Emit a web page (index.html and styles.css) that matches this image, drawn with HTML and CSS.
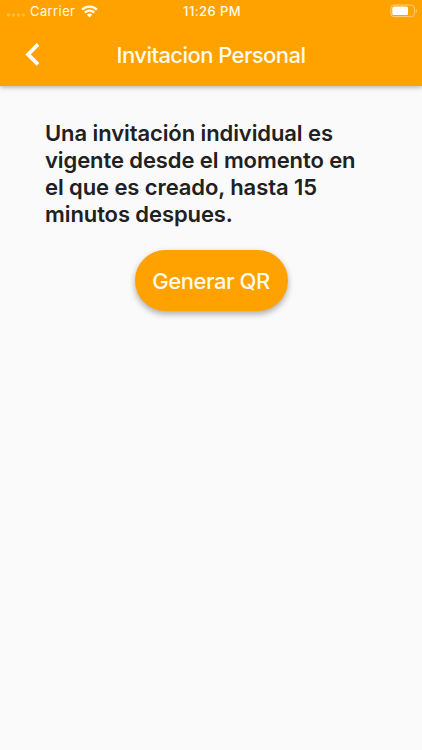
FILE: index.html
```html
<!DOCTYPE html>
<html lang="es">
<head>
<meta charset="utf-8">
<title>Invitacion Personal</title>
<link rel="stylesheet" href="styles.css">
</head>
<body>
<header class="header">
  <div class="status">
    <div class="carrier">
      <svg class="dots" width="20" height="4" viewBox="0 0 20 4"><g fill="#fff" opacity=".25"><circle cx="2.500" cy="2" r="1.700"/><circle cx="7.500" cy="2" r="1.700"/><circle cx="12.500" cy="2" r="1.700"/><circle cx="17.500" cy="2" r="1.700"/></g></svg>
      <span class="carrier-name">Carrier</span>
      <svg class="wifi" width="17" height="13" viewBox="0 0 17 13"><g fill="none" stroke="#fffbe8" stroke-width="2.300"><path d="M1 4.700a10.800 10.800 0 0 1 15 0"/><path d="M3.800 7.600a6.800 6.800 0 0 1 9.400 0"/></g><path d="M5.900 9.800a3.800 3.800 0 0 1 5.200 0L8.500 12.500z" fill="#fffbe8"/></svg>
    </div>
    <span class="time">11:26 PM</span>
    <svg class="battery" width="28" height="14" viewBox="0 0 28 14"><rect x=".9" y="1" width="23.500" height="11.600" rx="3" fill="none" stroke="#ffd078" stroke-width="1"/><rect x="2.300" y="2.500" width="15.700" height="8.600" rx="1.500" fill="#fff"/><path d="M25.800 4.800c1.700.6 1.700 3.500 0 4.100z" fill="#ffd078"/></svg>
  </div>
  <nav class="bar">
    <svg class="back" width="16" height="24" viewBox="0 0 16 24"><path d="M13 2.400 3 12.400l10 10" fill="none" stroke="#fff" stroke-width="3.700"/></svg>
    <h1 class="title">Invitacion Personal</h1>
  </nav>
</header>
<main class="content">
  <p class="message">Una invitación individual es<br>vigente desde el momento en<br>el que es creado, hasta 15<br>minutos despues.</p>
  <button class="generate">Generar QR</button>
</main>
</body>
</html>
```
FILE: styles.css
```css
* { box-sizing: border-box; }
body {
  margin: 0;
  min-height: 750px;
  background: #fafafa;
  font-family: Inter, "Liberation Sans", sans-serif;
}
.header {
  height: 86px;
  background: #ffa200;
  color: #fffbe8;
  box-shadow: 0 1px 5px rgba(0, 0, 0, .33);
}
.status {
  display: grid;
  grid-template-columns: 1fr auto 1fr;
  height: 22px;
  padding: 0 4px 0 6px;
  align-items: center;
}
.carrier { display: flex; align-items: center; }
.dots { margin-top: 8px; }
.carrier-name { margin-left: 4px; font-size: 13px; letter-spacing: .4px; }
.wifi { margin-left: 5.500px; }
.time { font-size: 13px; font-weight: 500; letter-spacing: .4px; }
.battery { justify-self: end; }
.bar {
  display: grid;
  grid-template-columns: 50px 1fr 50px;
  height: 64px;
  align-items: center;
}
.back { margin-left: 25px; }
.title {
  margin: 0;
  padding-top: 2px;
  text-align: center;
  font-size: 22px;
  font-weight: 500;
  letter-spacing: -.57px;
}
.content {
  display: flex;
  flex-direction: column;
  padding: 34px 45px;
}
.message {
  margin: 0;
  color: #212121;
  font-size: 22px;
  font-weight: 600;
  line-height: 27px;
  letter-spacing: -.09px;
  white-space: nowrap;
}
.generate {
  align-self: center;
  width: 153px;
  height: 61px;
  margin-top: 22px;
  padding: 1px 0 0;
  border: 0;
  border-radius: 31px;
  background: #ffa200;
  color: #fffbe8;
  box-shadow: 0 3px 6px rgba(0, 0, 0, .32);
  font: 500 22px/60px Inter, "Liberation Sans", sans-serif;
  letter-spacing: -.45px;
  white-space: nowrap;
}
```
